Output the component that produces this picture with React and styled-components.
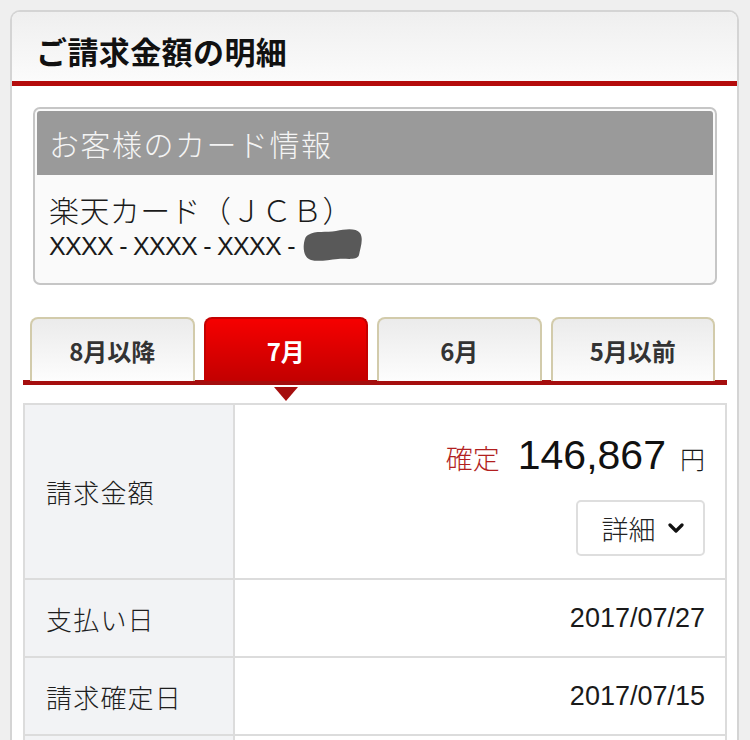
import React from 'react';
import styled, { createGlobalStyle } from 'styled-components';

const GlobalStyle = createGlobalStyle`
    html, body {
        margin: 0;
        padding: 0;
        overflow: hidden;
        background: #efefef;
        font-family: "Liberation Sans", "Noto Sans CJK JP", sans-serif;
        color: #222;
    }
`

const Page = styled.div`
    padding: 10px 11px 0 10px;
`

const Panel = styled.section`
    background: #fff;
    border: 2px solid #d4d4d4;
    border-bottom: none;
    border-radius: 10px 10px 0 0;
    overflow: hidden;
`

const PanelHeader = styled.header`
    height: 74px;
    box-sizing: border-box;
    display: flex;
    align-items: center;
    padding: 8px 24px 0;
    background: linear-gradient(#efefef, #fbfbfb);
    border-bottom: 5px solid #b40b0b;
`

const Title = styled.h1`
    margin: 0;
    font-family: "Noto Sans CJK JP", sans-serif;
    font-size: 31px;
    font-weight: 700;
    letter-spacing: 0.4px;
    color: #111;
`

const PanelBody = styled.div`
    padding: 21px 10px 0 11px;
`

const CardBox = styled.div`
    margin: 0 10px;
    padding: 2px;
    border: 2px solid #c6c6c6;
    border-radius: 7px;
    background: #fafafa;
`

const CardHead = styled.div`
    height: 64px;
    display: flex;
    align-items: center;
    padding: 0 12px;
    background: #9a9a9a;
    color: #f4f4f4;
    font-family: "Noto Sans CJK JP", sans-serif;
    font-size: 30px;
    font-weight: 300;
    letter-spacing: 1.5px;
    border-radius: 3px 3px 0 0;
`

const CardBody = styled.div`
    padding: 14px 12px 18px;
    display: flex;
    flex-direction: column;
`

const CardName = styled.div`
    font-family: "Noto Sans CJK JP", sans-serif;
    font-size: 30px;
    font-weight: 300;
    letter-spacing: 0.4px;
    line-height: 40px;
    color: #1a1a1a;
`

const CardNumber = styled.div`
    display: flex;
    align-items: center;
    font-size: 25px;
    line-height: 30px;
    color: #1a1a1a;
    letter-spacing: -0.7px;
`

const Blob = styled.svg`
    margin-left: 7px;
    margin-top: -2px;
`

const Tabs = styled.div`
    margin-top: 32px;
    padding: 0 12px 0 7px;
    display: grid;
    grid-template-columns: repeat(4, 1fr);
    gap: 9px;
    border-bottom: 5px solid #a50e0e;
`

const Tab = styled.div`
    position: relative;
    height: 62px;
    margin-bottom: -1px;
    display: flex;
    align-items: center;
    justify-content: center;
    border: 2px solid ${props => props.active ? '#c40000' : '#d2cbab'};
    border-bottom: none;
    border-radius: 8px 8px 0 0;
    background: ${props => props.active
        ? 'linear-gradient(#f60000, #c20000)'
        : 'linear-gradient(#ebebeb, #fdfdfd)'};
    color: ${props => props.active ? '#fff' : '#333'};
    font-family: "Noto Sans CJK JP", sans-serif;
    font-size: 24px;
    font-weight: 700;
`

const Pointer = styled.span`
    position: absolute;
    left: 50%;
    bottom: -20px;
    margin-left: -12px;
    width: 0;
    height: 0;
    border-left: 12px solid transparent;
    border-right: 12px solid transparent;
    border-top: 14px solid #a50e0e;
`

const Table = styled.div`
    margin-top: 18px;
    display: grid;
    grid-template-columns: 210px 1fr;
    border: 2px solid #dcdcdc;
    border-bottom: none;
`

const Label = styled.div`
    min-height: ${props => props.tall ? '173px' : '76px'};
    display: flex;
    align-items: center;
    padding: 0 21px;
    background: #f2f3f5;
    border-right: 2px solid #dcdcdc;
    border-bottom: 2px solid #dcdcdc;
    font-family: "Noto Sans CJK JP", sans-serif;
    font-size: 26px;
    font-weight: 300;
    letter-spacing: 1.2px;
    color: #1e1e1e;
`

const Value = styled.div`
    display: flex;
    flex-direction: column;
    align-items: flex-end;
    justify-content: ${props => props.top ? 'flex-start' : 'center'};
    padding: ${props => props.top ? '26px 20px 0' : '0 20px'};
    border-bottom: 2px solid #dcdcdc;
    font-size: 27px;
    color: #1a1a1a;
`

const Amount = styled.div`
    display: flex;
    align-items: baseline;
    line-height: 48px;
`

const Status = styled.span`
    color: #b21f1f;
    font-family: "Noto Sans CJK JP", sans-serif;
    font-size: 27px;
    font-weight: 300;
    margin-right: 18px;
`

const Number = styled.span`
    font-size: 41px;
    color: #111;
`

const Yen = styled.span`
    margin-left: 14px;
    font-family: "Noto Sans CJK JP", sans-serif;
    font-size: 25px;
    font-weight: 300;
`

const DetailButton = styled.button`
    margin-top: 18px;
    width: 129px;
    height: 56px;
    display: flex;
    align-items: center;
    justify-content: center;
    gap: 12px;
    background: #fff;
    border: 2px solid #dedede;
    border-radius: 5px;
    font-family: "Noto Sans CJK JP", sans-serif;
    font-size: 27px;
    font-weight: 300;
    color: #222;
    padding: 0 0 0 4px;
`

const rows = [
    { label: '支払い日', value: '2017/07/27' },
    { label: '請求確定日', value: '2017/07/15' },
    { label: '', value: '' },
]

const months = ['8月以降', '7月', '6月', '5月以前']

const App = () => (
    <Page>
        <GlobalStyle />
        <Panel>
            <PanelHeader>
                <Title>ご請求金額の明細</Title>
            </PanelHeader>
            <PanelBody>
                <CardBox>
                    <CardHead>お客様のカード情報</CardHead>
                    <CardBody>
                        <CardName>楽天カード（ＪＣＢ）</CardName>
                        <CardNumber>
                            XXXX - XXXX - XXXX -
                            <Blob width="62" height="36" viewBox="0 0 62 36">
                                <path d="M6 8 C14 3 24 6 34 4 C44 2 54 1 58 6 C62 12 58 22 57 28 C55 34 44 31 36 32 C26 33 16 35 9 33 C2 31 1 22 2 16 C3 12 3 10 6 8 Z" fill="#595959" />
                            </Blob>
                        </CardNumber>
                    </CardBody>
                </CardBox>

                <Tabs>
                    {months.map(m => (
                        <Tab key={m} active={m === '7月'}>
                            {m}
                            {m === '7月' && <Pointer />}
                        </Tab>
                    ))}
                </Tabs>

                <Table>
                    <Label tall>請求金額</Label>
                    <Value top>
                        <Amount>
                            <Status>確定</Status>
                            <Number>146,867</Number>
                            <Yen>円</Yen>
                        </Amount>
                        <DetailButton>
                            詳細
                            <svg width="16" height="12" viewBox="0 0 16 12">
                                <path d="M2 3 L8 9 L14 3" fill="none" stroke="#111" strokeWidth="3.2" strokeLinecap="round" strokeLinejoin="round" />
                            </svg>
                        </DetailButton>
                    </Value>
                    {rows.map((r, i) => (
                        <React.Fragment key={i}>
                            <Label>{r.label}</Label>
                            <Value>{r.value}</Value>
                        </React.Fragment>
                    ))}
                </Table>
            </PanelBody>
        </Panel>
    </Page>
);

export default App;
